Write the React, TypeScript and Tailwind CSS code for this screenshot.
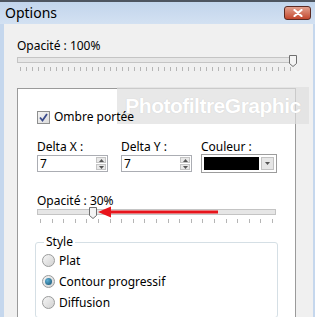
import React from 'react';

const font = { fontFamily: '"Noto Sans", "Segoe UI", Arial, sans-serif' };

const Ticks: React.FC<{ count: number }> = ({ count }) => (
  <div className="flex justify-between h-[4px] mt-[4px] px-[3px]">
    {Array.from({ length: count }).map((_, i) => (
      <div key={i} className="w-px h-[4px] bg-[#b5b5b5]" />
    ))}
  </div>
);

const Thumb: React.FC<{ left: number }> = ({ left }) => (
  <svg className="absolute top-[-3px]" style={{ left }} width="8" height="12" viewBox="0 0 8 12">
    <path d="M0.5 0.5 H7.5 V8.5 L4 11.5 L0.5 8.5 Z" fill="#f4f4f4" stroke="#6f6f6f" />
  </svg>
);

const Slider: React.FC<{ width: number; thumb: number; ticks: number }> = ({ width, thumb, ticks }) => (
  <div style={{ width }}>
    <div className="relative h-[6px] border border-[#c4c4c4] bg-[#e6e6e6]">
      <Thumb left={thumb} />
    </div>
    <Ticks count={ticks} />
  </div>
);

const Spin: React.FC<{ value: string }> = ({ value }) => (
  <div className="flex w-[71px] h-[17px] border border-[#abadb3] bg-white">
    <div className="flex-1 pl-[2px] text-[12px] leading-[15px] text-black">{value}</div>
    <div className="flex flex-col w-[11px] gap-px py-px pr-px">
      <div className="flex-1 bg-[#e8e8e8] border border-[#c4c4c4] flex items-center justify-center">
        <svg width="5" height="3" viewBox="0 0 5 3"><path d="M0 3 L2.5 0 L5 3 Z" fill="#555" /></svg>
      </div>
      <div className="flex-1 bg-[#e8e8e8] border border-[#c4c4c4] flex items-center justify-center">
        <svg width="5" height="3" viewBox="0 0 5 3"><path d="M0 0 L2.5 3 L5 0 Z" fill="#555" /></svg>
      </div>
    </div>
  </div>
);

const Radio: React.FC<{ label: string; checked?: boolean }> = ({ label, checked }) => (
  <div className="flex items-center gap-[4px] h-[21px]">
    <div className="w-[13px] h-[13px] rounded-full border border-[#9a9b9b] bg-gradient-to-br from-[#f6f6f6] to-[#d2d2d2] flex items-center justify-center">
      {checked && <div className="w-[7px] h-[7px] rounded-full bg-[radial-gradient(circle_at_35%_35%,#5fb0d6,#124f6d)]" />}
    </div>
    <span className="text-[12px] text-black">{label}</span>
  </div>
);

export default function App() {
  return (
    <div className="w-[315px] h-[317px] overflow-hidden bg-[#c5d7ed] flex flex-col" style={font}>
      <div className="h-[2px] shrink-0 bg-[#4d5560]" />
      <div className="h-[22px] shrink-0 flex items-center justify-between pl-[5px] pr-[4px] bg-gradient-to-b from-[#c2d5ec] to-[#d3e1f2]">
        <span className="text-[14px] text-black leading-none mt-[-1px]">Options</span>
        <div className="w-[27px] h-[14px] rounded-[3px] border border-[#5b2a22] bg-gradient-to-b from-[#e2a08e] to-[#c2452c] flex items-center justify-center">
          <svg width="10" height="8" viewBox="0 0 10 8">
            <path d="M1.5 1 L8.5 7 M8.5 1 L1.5 7" stroke="#fff" strokeWidth="2.2" strokeLinecap="round" />
          </svg>
        </div>
      </div>
      <div className="flex-1 min-h-0 overflow-hidden ml-[4px] mr-[2px] bg-[#f0f0f0] pl-[13px] pt-[14px] flex flex-col">
        <div className="text-[12px] text-black leading-[16px] mb-[3px]">Opacité : 100%</div>
        <Slider width={277} thumb={271} ticks={46} />

        <div className="relative mt-[17px] w-[279px] flex-1 shrink-0 border border-[#9a9a9a] border-b-0 bg-white pl-[19px] pt-[21px]">
          <div className="absolute left-[99px] top-[-2px] w-[192px] h-[37px] bg-[#dedede]/70 flex items-center justify-center">
            <span className="text-[21px] font-bold tracking-[-0.5px] text-white" style={{ fontFamily: '"Liberation Sans", Arial, sans-serif', textShadow: '0 0 1px #c8c8c8' }}>
              PhotofiltreGraphic
            </span>
          </div>

          <div className="relative flex items-center gap-[4px] h-[14px]">
            <div className="w-[13px] h-[13px] border border-[#8e8f8f] bg-gradient-to-br from-[#f4f4f4] to-[#dcdcdc] flex items-center justify-center">
              <svg width="9" height="9" viewBox="0 0 9 9">
                <path d="M1 4.5 L3.5 7.5 L8 1" stroke="#3a4b8c" strokeWidth="1.8" fill="none" />
              </svg>
            </div>
            <span className="text-[12px] text-black">Ombre portée</span>
          </div>

          <div className="flex mt-[15px]">
            <div className="w-[84px]">
              <div className="text-[12px] leading-[16px] text-black">Delta X :</div>
              <Spin value="7" />
            </div>
            <div className="w-[80px]">
              <div className="text-[12px] leading-[16px] text-black">Delta Y :</div>
              <Spin value="7" />
            </div>
            <div>
              <div className="text-[12px] leading-[16px] text-black">Couleur :</div>
              <div className="flex w-[76px] h-[19px] border border-[#9c9c9c] bg-white p-[2px] gap-[2px] mt-[-1px]">
                <div className="flex-1 bg-black" />
                <div className="w-[13px] bg-[#e6e6e6] border border-[#c2c2c2] flex items-center justify-center">
                  <svg width="5" height="3" viewBox="0 0 5 3"><path d="M0 0 L2.5 3 L5 0 Z" fill="#555" /></svg>
                </div>
              </div>
            </div>
          </div>

          <div className="text-[12px] leading-[16px] text-black mt-[20px]">Opacité : 30%</div>
          <div className="relative">
            <Slider width={239} thumb={51} ticks={21} />
            <svg className="absolute left-[60px] top-[-3px]" width="122" height="12" viewBox="0 0 122 12">
              <path d="M12 6 H121" stroke="#e8141b" strokeWidth="3" />
              <path d="M1 6 L14 0.5 L14 11.5 Z" fill="#e8141b" />
            </svg>
          </div>

          <div className="relative mt-[19px] w-[243px] ml-[-2px] border border-[#d5dfe5] rounded-[3px] pl-[6px] pt-[7px] pb-[4px]">
            <span className="absolute left-[8px] top-[-9px] bg-white px-[2px] text-[12px] leading-[16px] text-black">Style</span>
            <Radio label="Plat" />
            <Radio label="Contour progressif" checked />
            <Radio label="Diffusion" />
          </div>
        </div>
      </div>
    </div>
  );
}
